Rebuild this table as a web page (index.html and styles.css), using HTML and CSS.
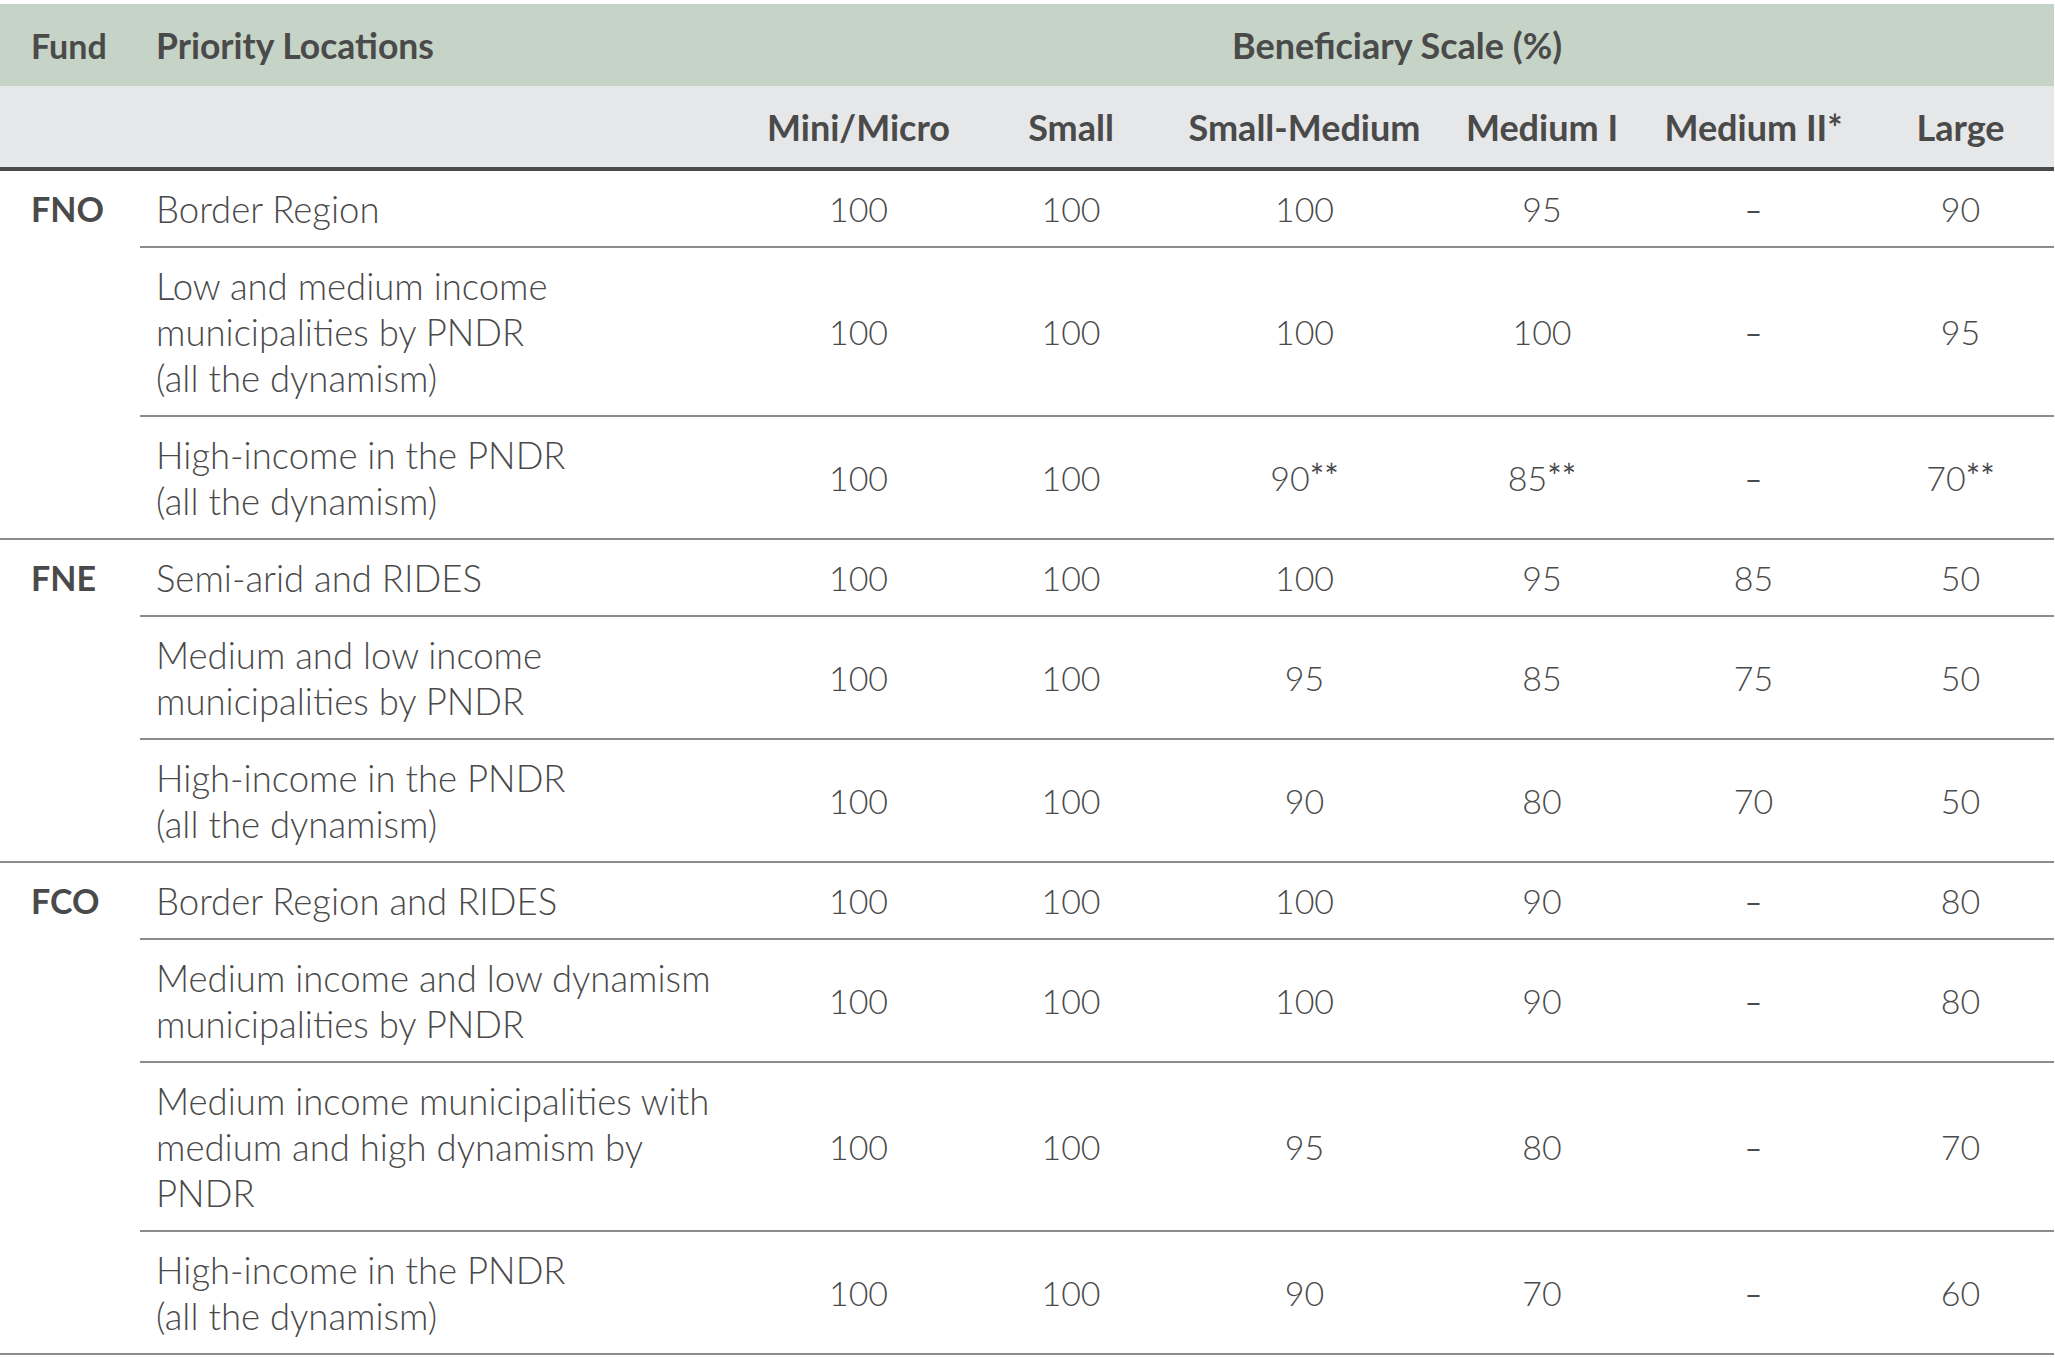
FILE: index.html
```html
<!DOCTYPE html>
<html lang="en">
<head>
<meta charset="utf-8">
<title>Beneficiary Scale</title>
<link rel="stylesheet" href="styles.css">
</head>
<body>
<div class="page">
<table class="scale">
  <colgroup>
    <col class="c-fund">
    <col class="c-loc">
    <col class="c-mini">
    <col class="c-small">
    <col class="c-smed">
    <col class="c-med1">
    <col class="c-med2">
    <col class="c-large">
  </colgroup>
  <thead>
    <tr class="h1">
      <th class="fund">Fund</th>
      <th class="loc">Priority Locations</th>
      <th class="span" colspan="6">Beneficiary Scale (%)</th>
    </tr>
    <tr class="h2">
      <th class="fund"></th>
      <th class="loc"></th>
      <th>Mini/Micro</th>
      <th>Small</th>
      <th>Small-Medium</th>
      <th>Medium I</th>
      <th>Medium II*</th>
      <th>Large</th>
    </tr>
  </thead>
  <tbody class="group">
    <tr>
      <th class="fund" rowspan="3">FNO</th>
      <td class="loc">Border Region</td>
      <td>100</td><td>100</td><td>100</td><td>95</td><td class="na">–</td><td>90</td>
    </tr>
    <tr>
      <td class="loc">Low and medium income<br>municipalities by PNDR<br>(all the dynamism)</td>
      <td>100</td><td>100</td><td>100</td><td>100</td><td class="na">–</td><td>95</td>
    </tr>
    <tr class="last">
      <td class="loc">High-income in the PNDR<br>(all the dynamism)</td>
      <td>100</td><td>100</td><td>90<span class="ast">**</span></td><td>85<span class="ast">**</span></td><td class="na">–</td><td>70<span class="ast">**</span></td>
    </tr>
  </tbody>
  <tbody class="group">
    <tr>
      <th class="fund" rowspan="3">FNE</th>
      <td class="loc">Semi-arid and RIDES</td>
      <td>100</td><td>100</td><td>100</td><td>95</td><td>85</td><td>50</td>
    </tr>
    <tr>
      <td class="loc">Medium and low income<br>municipalities by PNDR</td>
      <td>100</td><td>100</td><td>95</td><td>85</td><td>75</td><td>50</td>
    </tr>
    <tr class="last">
      <td class="loc">High-income in the PNDR<br>(all the dynamism)</td>
      <td>100</td><td>100</td><td>90</td><td>80</td><td>70</td><td>50</td>
    </tr>
  </tbody>
  <tbody class="group">
    <tr>
      <th class="fund" rowspan="4">FCO</th>
      <td class="loc">Border Region and RIDES</td>
      <td>100</td><td>100</td><td>100</td><td>90</td><td class="na">–</td><td>80</td>
    </tr>
    <tr>
      <td class="loc">Medium income and low dynamism<br>municipalities by PNDR</td>
      <td>100</td><td>100</td><td>100</td><td>90</td><td class="na">–</td><td>80</td>
    </tr>
    <tr>
      <td class="loc">Medium income municipalities with<br>medium and high dynamism by<br>PNDR</td>
      <td>100</td><td>100</td><td>95</td><td>80</td><td class="na">–</td><td>70</td>
    </tr>
    <tr class="last">
      <td class="loc">High-income in the PNDR<br>(all the dynamism)</td>
      <td>100</td><td>100</td><td>90</td><td>70</td><td class="na">–</td><td>60</td>
    </tr>
  </tbody>
</table>
</div>
</body>
</html>
```

FILE: styles.css
```css
html, body {
  margin: 0;
  padding: 0;
  background: #ffffff;
}

.page {
  padding-top: 4px;
}

.scale {
  width: 2054px;
  table-layout: fixed;
  border-collapse: collapse;
  font-family: Lato, "Open Sans", "Liberation Sans", sans-serif;
  color: #4a4a4a;
}

.c-fund { width: 140px; }
.c-loc { width: 600px; }
.c-mini { width: 237px; }
.c-small { width: 188px; }
.c-smed { width: 279px; }
.c-med1 { width: 196px; }
.c-med2 { width: 227px; }
.c-large { width: 187px; }

.scale th,
.scale td {
  padding: 0;
  vertical-align: middle;
}

.h1 th {
  background: #c6d3c7;
  height: 82px;
  font-size: 36px;
  font-weight: 700;
  text-align: center;
}

.h2 th {
  background: #e6e7e8;
  height: 81px;
  font-size: 36px;
  font-weight: 700;
  text-align: center;
  border-bottom: 4px solid #4a4a4a;
}

.scale thead th.fund {
  text-align: left;
  padding-left: 31px;
  font-size: 34px;
}

.scale thead th.loc {
  text-align: left;
  padding-left: 16px;
  font-size: 35.5px;
}

.scale tbody td {
  font-size: 34px;
  font-weight: 300;
  line-height: 46px;
  text-align: center;
  padding: 15px 0 14px;
  border-bottom: 2px solid #8c8c8c;
}

.scale tbody td.loc {
  font-size: 36.5px;
  text-align: left;
  padding-left: 16px;
}

.scale tbody td.na {
  font-size: 30px;
  font-weight: 400;
}

.scale tbody th.fund {
  font-size: 34px;
  font-weight: 700;
  line-height: 46px;
  text-align: left;
  vertical-align: top;
  padding: 15px 0 14px 31px;
  border-bottom: 2px solid #8c8c8c;
}

.ast {
  font-size: 1em;
  font-weight: 400;
  vertical-align: 0.05em;
  line-height: 0;
}
```
